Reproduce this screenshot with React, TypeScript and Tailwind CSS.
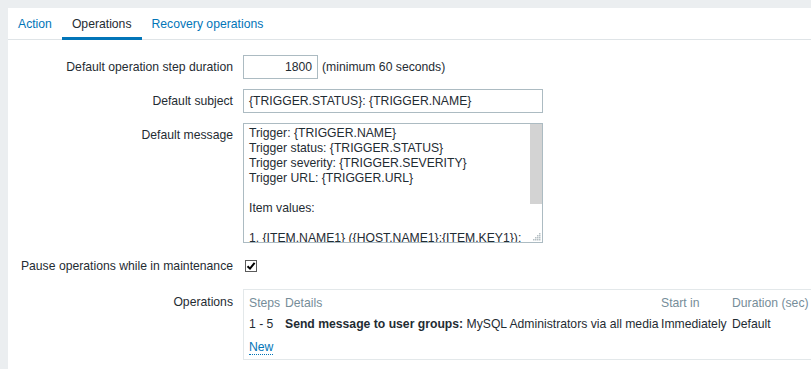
import React from "react";

const lines = [
  "Trigger: {TRIGGER.NAME}",
  "Trigger status: {TRIGGER.STATUS}",
  "Trigger severity: {TRIGGER.SEVERITY}",
  "Trigger URL: {TRIGGER.URL}",
  "",
  "Item values:",
  "",
  "1. {ITEM.NAME1} ({HOST.NAME1}:{ITEM.KEY1}):",
];

// grip dots in the corner of the textarea
const gripDots: [number, number][] = [
  [6, 0], [6, 2], [4, 2], [6, 4], [4, 4], [2, 4], [6, 6], [4, 6], [2, 6], [0, 6],
];

const Label: React.FC<{ children: React.ReactNode; className?: string }> = ({ children, className = "" }) => (
  <div className={`w-[215px] shrink-0 text-right ${className}`}>{children}</div>
);

export default function App() {
  return (
    <div className="h-[369px] w-[811px] overflow-hidden bg-[#ebeef0] pl-2 pt-2 font-['Liberation_Sans',Arial,sans-serif] text-[12.2px] leading-[14px] text-[#1f2c33]">
      <div className="h-full overflow-hidden bg-white">
        {/* Tabs */}
        <div className="flex h-[32px] border-b border-[#dfe4e7]">
          <div className="flex items-center px-[10px] text-[#0275b8]">Action</div>
          <div className="relative flex items-center px-[10px]">
            Operations
            <span className="absolute -bottom-px left-0 right-0 h-[3px] bg-[#0275b8]" />
          </div>
          <div className="flex items-center px-[10px] text-[#0275b8]">Recovery operations</div>
        </div>

        {/* Form */}
        <div className="flex flex-col gap-[10px] pl-[10px] pt-[15px]">
          <div className="flex h-[24px] items-center">
            <Label>Default operation step duration</Label>
            <div className="ml-[10px] h-[24px] w-[75px] border border-[#acbbc2] pr-[5px] text-right leading-[22px]">1800</div>
            <span className="ml-[4px]">(minimum 60 seconds)</span>
          </div>

          <div className="flex h-[24px] items-center">
            <Label>Default subject</Label>
            <div className="ml-[10px] h-[24px] w-[300px] border border-[#acbbc2] pl-[5px] leading-[22px]">
              {"{TRIGGER.STATUS}: {TRIGGER.NAME}"}
            </div>
          </div>

          <div className="flex">
            <Label className="pt-[5px]">Default message</Label>
            <div className="relative ml-[10px] h-[120px] w-[300px] overflow-hidden border border-[#acbbc2] pl-[5px] pt-[2px] leading-[15px]">
              {lines.map((l, i) => (
                <div key={i} className="h-[15px] whitespace-nowrap">{l}</div>
              ))}
              <span className="absolute right-0 top-0 h-[80px] w-[12px] bg-[#d3d3d3]" />
              <svg className="absolute bottom-[1px] right-[1px]" width="8" height="8" viewBox="0 0 8 8">
                {gripDots.map(([x, y], i) => (
                  <rect key={i} x={x} y={y} width="1.5" height="1.5" fill="#b5bfc4" />
                ))}
              </svg>
            </div>
          </div>

          <div className="flex h-[26px] items-center">
            <Label>Pause operations while in maintenance</Label>
            <div className="ml-[12px] flex h-[12px] w-[12px] items-center justify-center border border-[#5a5a5a] bg-white">
              <svg width="10" height="10" viewBox="0 0 10 10">
                <path d="M1.5 5.2 L4 7.6 L8.6 1.8" fill="none" stroke="#000" strokeWidth="2" />
              </svg>
            </div>
          </div>

          <div className="flex">
            <Label className="pt-[6px]">Operations</Label>
            <div className="ml-[10px] w-[620px] shrink-0 border border-[#e3e8ea] px-[5px] pb-[5px]">
              <div className="flex h-[26px] items-center text-[#768d99]">
                <div className="w-[36px] shrink-0">Steps</div>
                <div className="w-[376px] shrink-0">Details</div>
                <div className="w-[71px] shrink-0">Start in</div>
                <div className="whitespace-nowrap">Duration (sec)</div>
              </div>
              <div className="flex h-[16px] items-center">
                <div className="w-[36px] shrink-0">1 - 5</div>
                <div className="w-[376px] shrink-0 whitespace-nowrap">
                  <b className="font-bold">Send message to user groups:</b> MySQL Administrators via all media
                </div>
                <div className="w-[71px] shrink-0">Immediately</div>
                <div>Default</div>
              </div>
              <div className="pt-[8px]">
                <span className="border-b border-dotted border-[#0275b8] text-[#0275b8]">New</span>
              </div>
            </div>
          </div>
        </div>
      </div>
    </div>
  );
}
